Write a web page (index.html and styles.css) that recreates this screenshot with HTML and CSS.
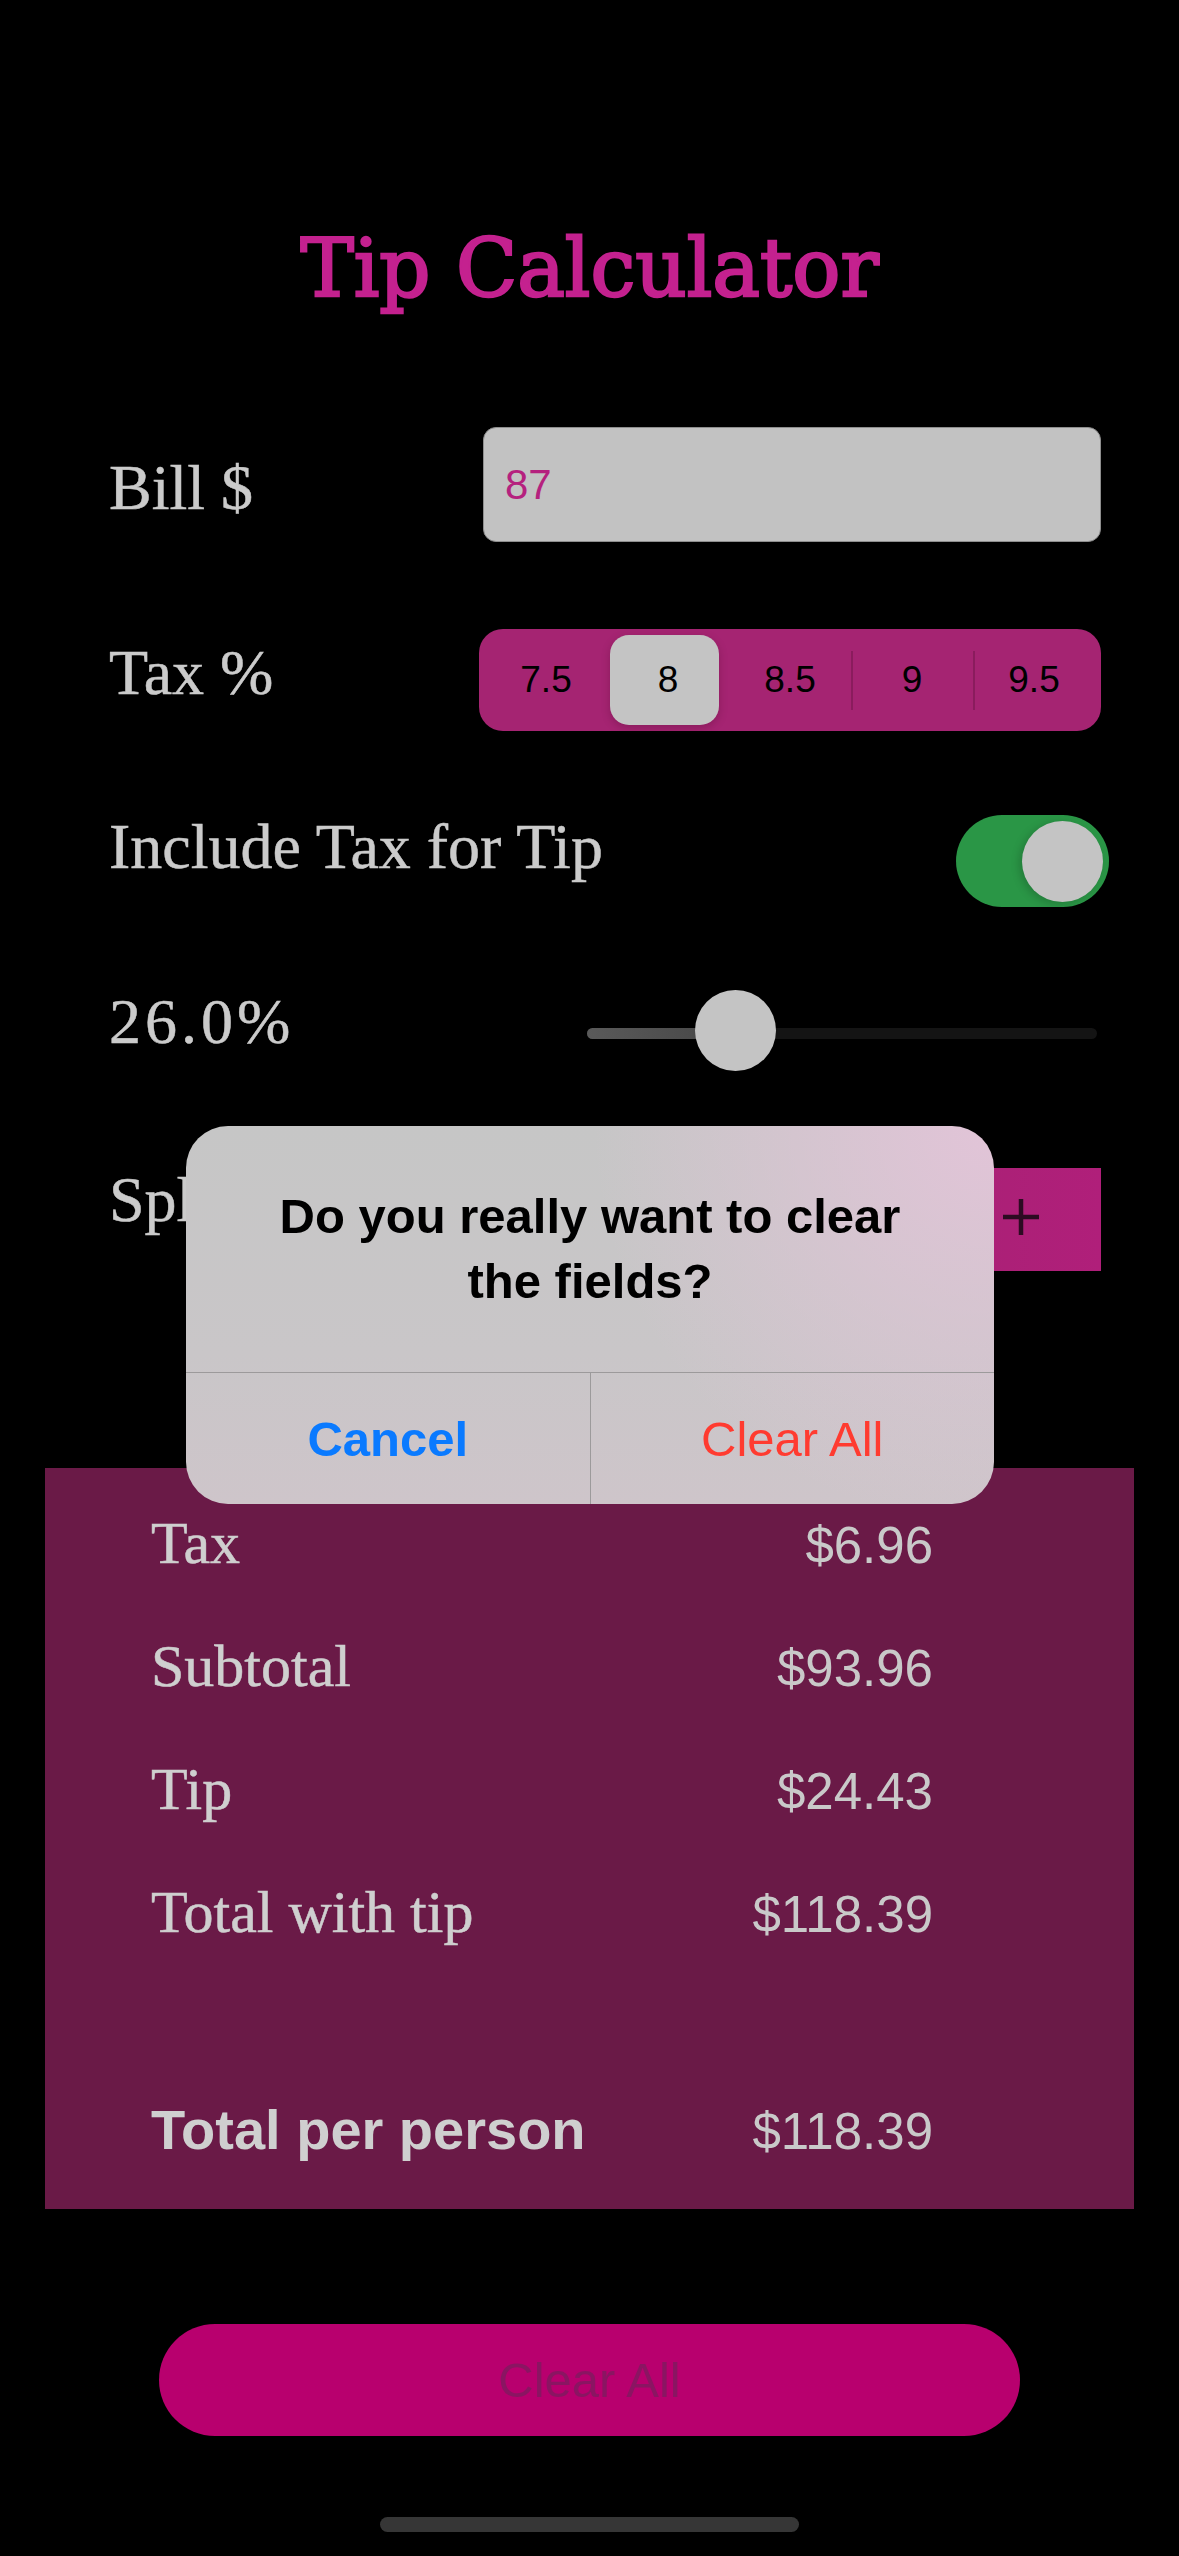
FILE: index.html
```html
<!DOCTYPE html>
<html lang="en">
<head>
<meta charset="utf-8">
<title>Tip Calculator</title>
<link rel="stylesheet" href="styles.css">
</head>
<body>
<div class="screen">
  <h1 class="title">Tip Calculator</h1>

  <div class="form">
    <div class="row row-bill">
      <span class="label">Bill $</span>
      <div class="input">87</div>
    </div>

    <div class="row row-tax">
      <span class="label">Tax %</span>
      <div class="seg-ctrl">
        <div class="seg"><span>7.5</span></div>
        <div class="seg sel"><span>8</span></div>
        <div class="seg"><span>8.5</span></div>
        <div class="seg sep"><span>9</span></div>
        <div class="seg sep"><span>9.5</span></div>
      </div>
    </div>

    <div class="row row-toggle">
      <span class="label">Include Tax for Tip</span>
      <div class="toggle"><div class="knob"></div></div>
    </div>

    <div class="row row-slider">
      <span class="label num">26.0%</span>
      <div class="slider">
        <div class="track"><div class="fill" style="width:148px"></div></div>
        <div class="thumb" style="left:108px"></div>
      </div>
    </div>

    <div class="row row-split">
      <span class="label">Split 1</span>
      <div class="stepper">
        <span class="step">
          <svg width="40" height="40" viewBox="0 0 40 40"><path d="M2 20H38" stroke="#2d0b22" stroke-width="4.5"/></svg>
        </span>
        <span class="step">
          <svg width="40" height="40" viewBox="0 0 40 40"><path d="M20 2V38M2 20H38" stroke="#2d0b22" stroke-width="4.5"/></svg>
        </span>
      </div>
    </div>
  </div>

  <div class="results">
    <div class="res-row"><span class="res-label">Tax</span><span class="res-value">$6.96</span></div>
    <div class="res-row"><span class="res-label">Subtotal</span><span class="res-value">$93.96</span></div>
    <div class="res-row"><span class="res-label">Tip</span><span class="res-value">$24.43</span></div>
    <div class="res-row"><span class="res-label">Total with tip</span><span class="res-value">$118.39</span></div>
    <div class="res-row res-total"><span class="res-label-bold">Total per person</span><span class="res-value">$118.39</span></div>
  </div>

  <button class="clear-btn">Clear All</button>

  <div class="home-indicator"></div>

  <div class="alert">
    <div class="alert-body">
      <p class="alert-title">Do you really want to clear the fields?</p>
    </div>
    <div class="alert-actions">
      <div class="alert-btn cancel">Cancel</div>
      <div class="alert-btn destructive">Clear All</div>
    </div>
  </div>
</div>
</body>
</html>
```

FILE: styles.css
```css
html, body {
  margin: 0;
  padding: 0;
  background: #000;
}

.screen {
  width: 1179px;
  height: 2556px;
  position: relative;
  overflow: hidden;
  background: #000;
}

.title {
  margin: 0;
  padding-top: 221px;
  font-family: "DejaVu Serif", serif;
  font-weight: 400;
  font-size: 80px;
  line-height: 96px;
  color: #c4218f;
  -webkit-text-stroke: 2.5px #c4218f;
  text-align: center;
}

.form {
  padding: 0 78px 0 109px;
  display: flex;
  flex-direction: column;
}

.row {
  display: flex;
  align-items: center;
  justify-content: space-between;
}

.label {
  font-family: "Liberation Serif", serif;
  font-size: 64px;
  line-height: 70px;
  color: #cbcbcb;
  -webkit-text-stroke: 0.5px #cbcbcb;
  white-space: nowrap;
}

.label.num {
  letter-spacing: 4px;
}

.row-bill { margin-top: 110px; height: 115px; }
.row-bill .label { margin-top: 6px; }

.row-tax { margin-top: 87px; height: 102px; }
.row-tax .label { margin-bottom: 14px; }

.row-toggle { margin-top: 84px; height: 92px; }
.row-toggle .label { margin-bottom: 29px; }

.row-slider { margin-top: 83px; height: 81px; }
.row-slider .label { margin-bottom: 17px; }

.row-split { margin-top: 97px; height: 103px; }
.row-split .label { margin-bottom: 40px; }

/* Bill input */
.input {
  box-sizing: border-box;
  width: 618px;
  height: 115px;
  background: #c2c2c2;
  border: 1.5px solid #8e8e8e;
  border-radius: 13px;
  padding-left: 21px;
  display: flex;
  align-items: center;
  font-family: "Liberation Sans", sans-serif;
  font-size: 42px;
  color: #b5217e;
}

/* Segmented control */
.seg-ctrl {
  box-sizing: border-box;
  width: 622px;
  height: 102px;
  padding: 6px;
  border-radius: 24px;
  background: #a52472;
  display: flex;
}

.seg {
  position: relative;
  box-sizing: border-box;
  width: 20%;
  display: flex;
  align-items: center;
  justify-content: center;
  font-family: "Liberation Sans", sans-serif;
  font-size: 37px;
  color: #000;
}

.seg span {
  position: relative;
}

.seg.sel::before {
  content: "";
  position: absolute;
  top: 0;
  bottom: 0;
  left: 3px;
  right: 10px;
  background: #c4c4c4;
  border-radius: 19px;
  box-shadow: 0 3px 8px rgba(60, 0, 30, 0.25);
}

.seg.sep {
  background: linear-gradient(#8a1c5d, #8a1c5d) left center / 2px 59px no-repeat;
}

/* Toggle */
.toggle {
  box-sizing: border-box;
  width: 153px;
  height: 92px;
  margin-right: -8px;
  padding: 6px;
  border-radius: 46px;
  background: #2a9646;
  display: flex;
  justify-content: flex-end;
}

.knob {
  width: 81px;
  height: 81px;
  border-radius: 50%;
  background: #c4c4c4;
  box-shadow: -3px 2px 8px rgba(0, 0, 0, 0.18);
}

/* Slider */
.slider {
  position: relative;
  width: 510px;
  height: 81px;
  margin-right: 4px;
  display: flex;
  align-items: center;
}

.track {
  flex: 1;
  height: 11px;
  margin-top: 5px;
  border-radius: 6px;
  background: #141414;
  overflow: hidden;
}

.fill {
  height: 100%;
  background: linear-gradient(90deg, #5a5a5a, #454545);
}

.thumb {
  position: absolute;
  top: 0;
  width: 81px;
  height: 81px;
  border-radius: 50%;
  background: #c4c4c4;
}

/* Stepper */
.stepper {
  box-sizing: border-box;
  width: 282px;
  height: 103px;
  padding-right: 13px;
  display: flex;
  background: linear-gradient(90deg, #a42272, #b01f7a);
}

.step {
  flex: 1;
  display: flex;
  align-items: center;
  justify-content: center;
  padding-bottom: 6px;
}

/* Results */
.results {
  margin: 197px 45px 0;
  padding: 39px 201px 43px 106px;
  background: #6a1a47;
  display: flex;
  flex-direction: column;
  gap: 51px;
}

.res-row {
  height: 72px;
  display: flex;
  justify-content: space-between;
  align-items: baseline;
}

.res-total {
  margin-top: 95px;
}

.res-label {
  font-family: "Liberation Serif", serif;
  font-size: 60px;
  line-height: 72px;
  color: #cfcfcf;
  -webkit-text-stroke: 0.5px #cfcfcf;
}

.res-label-bold {
  font-family: "Liberation Sans", sans-serif;
  font-weight: 700;
  font-size: 56px;
  line-height: 72px;
  color: #cfcfcf;
}

.res-value {
  font-family: "Liberation Sans", sans-serif;
  font-size: 51px;
  line-height: 72px;
  color: #c9c9c9;
}

/* Bottom button */
.clear-btn {
  display: block;
  margin: 115px auto 0;
  width: 861px;
  height: 112px;
  border: none;
  border-radius: 56px;
  background: #b8006e;
  color: #8a1562;
  font-family: "Liberation Sans", sans-serif;
  font-size: 49px;
  line-height: 112px;
  padding: 0;
}

.home-indicator {
  margin: 81px auto 0;
  width: 419px;
  height: 15px;
  border-radius: 8px;
  background: #363636;
}

/* Alert */
.alert {
  position: absolute;
  left: 186px;
  top: 1126px;
  width: 808px;
  height: 378px;
  border-radius: 42px;
  overflow: hidden;
  display: flex;
  flex-direction: column;
  background:
    radial-gradient(circle at 100% 0%, rgba(226, 196, 216, 1) 0%, rgba(226, 196, 216, 0) 45%),
    linear-gradient(180deg, #c6c6c6 0%, #c9c6c8 60%, #cec5ca 100%);
}

.alert-body {
  box-sizing: border-box;
  height: 246px;
  padding: 58px 60px 0;
  text-align: center;
}

.alert-title {
  margin: 0;
  font-family: "Liberation Sans", sans-serif;
  font-weight: 700;
  font-size: 49px;
  line-height: 65px;
  color: #000;
}

.alert-actions {
  flex: 1;
  display: flex;
  border-top: 1.5px solid #9c9a9b;
}

.alert-btn {
  flex: 1;
  display: flex;
  align-items: center;
  justify-content: center;
  font-family: "Liberation Sans", sans-serif;
  font-size: 49px;
}

.alert-btn + .alert-btn {
  border-left: 1px solid #9c9a9b;
}

.cancel {
  color: #0a7aff;
  font-weight: 700;
}

.destructive {
  color: #ff3b30;
}
```
